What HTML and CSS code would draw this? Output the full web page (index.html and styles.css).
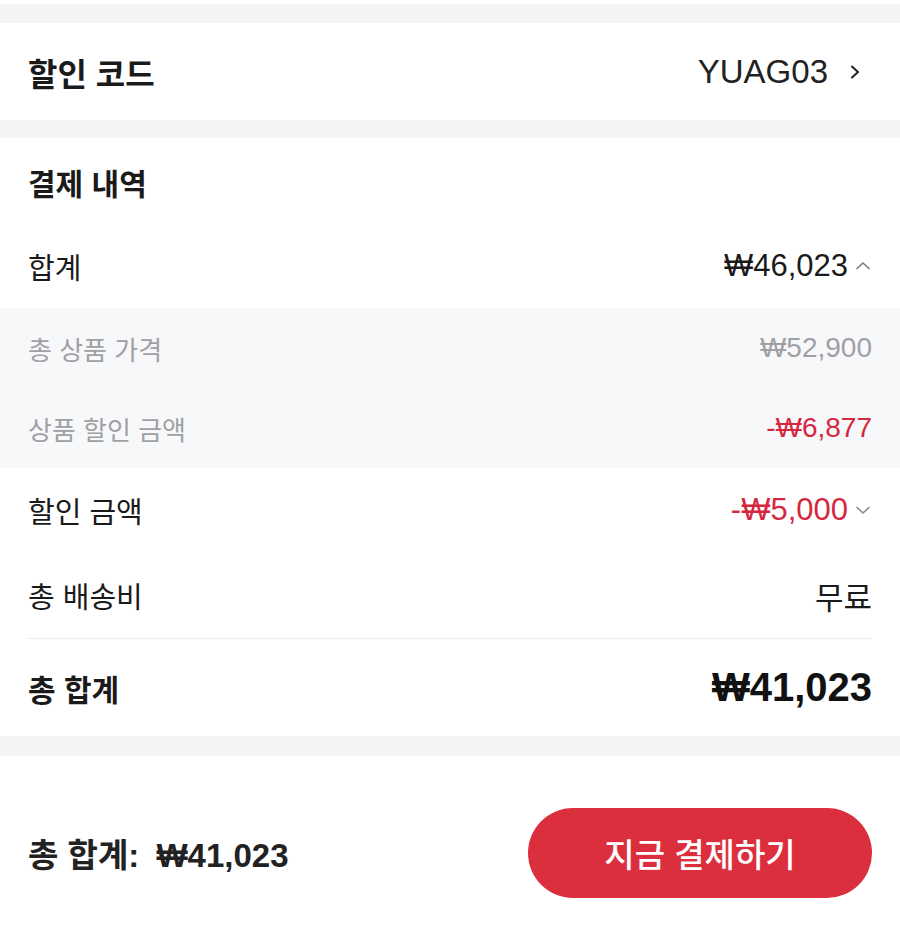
FILE: index.html
```html
<!DOCTYPE html>
<html lang="ko">
<head>
  <meta charset="UTF-8" />
  <meta name="viewport" content="width=device-width, initial-scale=1.0" />
  <title>결제</title>
  <link rel="stylesheet" href="styles.css">
</head>
<body>
  <div class="gap top"></div>

  <section class="card coupon">
    <div class="row">
      <span class="label strong">할인 코드</span>
      <span class="value">YUAG03
        <svg class="chev" width="14" height="14" viewBox="0 0 14 14"><path d="M4 1.5 L10 7 L4 12.5" fill="none" stroke="#222" stroke-width="2" stroke-linecap="round" stroke-linejoin="round"/></svg>
      </span>
    </div>
  </section>

  <div class="gap"></div>

  <section class="card summary">
    <h2>결제 내역</h2>
    <div class="row line">
      <span class="label">합계</span>
      <span class="value">₩46,023
        <svg class="toggle" width="18" height="16" viewBox="0 0 18 16"><path d="M3 10.5 L9 5 L15 10.5" fill="none" stroke="#777" stroke-width="1.6" stroke-linecap="round" stroke-linejoin="round"/></svg>
      </span>
    </div>
    <div class="detail">
      <div class="row sub">
        <span class="label">총 상품 가격</span>
        <span class="value">₩52,900</span>
      </div>
      <div class="row sub">
        <span class="label">상품 할인 금액</span>
        <span class="value minus">-₩6,877</span>
      </div>
    </div>
    <div class="row line">
      <span class="label">할인 금액</span>
      <span class="value minus">-₩5,000
        <svg class="toggle" width="18" height="16" viewBox="0 0 18 16"><path d="M3 5.5 L9 11 L15 5.5" fill="none" stroke="#888" stroke-width="1.6" stroke-linecap="round" stroke-linejoin="round"/></svg>
      </span>
    </div>
    <div class="row line ship">
      <span class="label">총 배송비</span>
      <span class="value">무료</span>
    </div>
    <div class="row total">
      <span class="label strong">총 합계</span>
      <span class="value big">₩41,023</span>
    </div>
  </section>

  <div class="gap"></div>

  <footer class="paybar">
    <span class="pay-total">총 합계: <span class="pay-amount">₩41,023</span></span>
    <button class="pay-btn">지금 결제하기</button>
  </footer>
</body>
</html>
```

FILE: styles.css
```css
* { box-sizing: border-box; margin: 0; padding: 0; }
body { font-family: "Liberation Sans", "Noto Sans CJK KR", sans-serif; background: #fff; color: #1a1a1a; width: 900px; }

.gap { height: 18px; background: #f4f4f4; }
.gap.top { height: 23px; border-top: 4px solid #fff; }

.card { background: #fff; padding: 0 28px; }
.row { display: flex; justify-content: space-between; align-items: center; }
.label { font-size: 29px; }
.value { font-size: 31px; display: flex; align-items: center; }
.strong { font-weight: 700; }

.coupon .row { height: 97px; }
.coupon .label { font-size: 32px; }
.coupon .value { font-size: 33px; color: #222; }
.chev { margin-left: 20px; margin-right: 10px; }

.summary h2 { font-size: 30px; font-weight: 700; padding-top: 22px; height: 86px; }
.summary .line { height: 84px; }
.summary .ship { height: 86px; }
.toggle { margin-left: 6px; }
.minus { color: #d5283f; }

.detail { background: #f7f8fa; margin: 0 -28px; padding: 0 28px; }
.detail .row { height: 80px; }
.sub .label { font-size: 26px; color: #a0a0a4; }
.sub .value { font-size: 28px; color: #a0a0a4; }
.sub .value.minus { color: #d5283f; }

.total { border-top: 1px solid #ececec; height: 98px; }
.total .label { font-size: 30px; }
.big { font-size: 40px; font-weight: 700; color: #111; }

.gap + .paybar { border-top: 2px solid #f4f4f4; }
.paybar { display: flex; justify-content: space-between; align-items: center; padding: 52px 28px 40px; }
.pay-total { font-size: 33px; font-weight: 700; color: #222; }
.pay-amount { margin-left: 8px; }
.pay-btn { width: 344px; height: 90px; border: none; border-radius: 45px; background: #dc2f3e; color: #fff; font-family: "Noto Sans CJK KR", sans-serif; font-size: 33px; font-weight: 500; }
```
